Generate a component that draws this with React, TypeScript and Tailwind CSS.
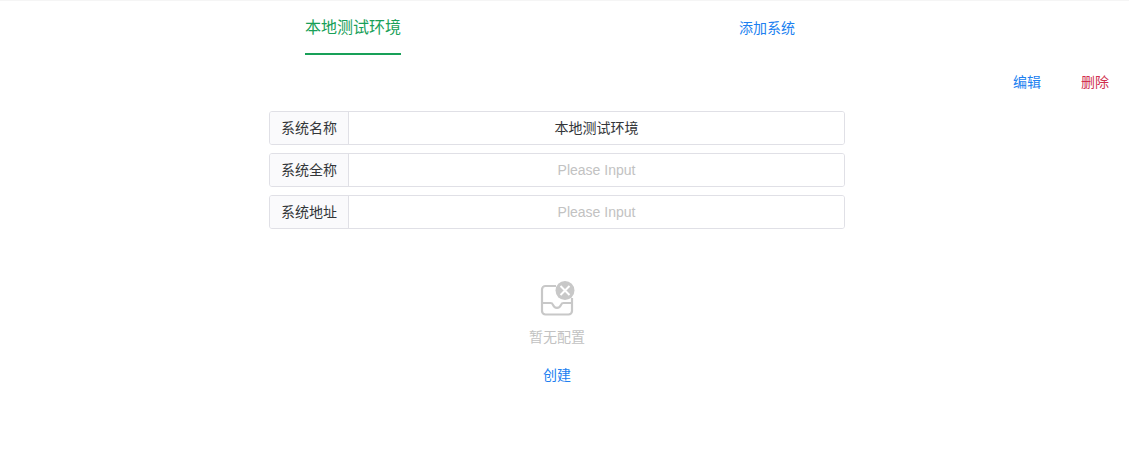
const FONT = "font-['Liberation_Sans','Noto_Sans_CJK_SC',sans-serif]";

const rows = [
  { label: '系统名称', value: '本地测试环境' },
  { label: '系统全称', value: '' },
  { label: '系统地址', value: '' },
];

const EmptyIcon = () => (
  <svg width="36" height="38" viewBox="0 0 36 38" fill="none" className="block">
    <path
      d="M17 6H6.5A3.5 3.5 0 0 0 3 9.5v21.5A3.5 3.5 0 0 0 6.5 34.5h23a3.5 3.5 0 0 0 3.5-3.5V18"
      stroke="#c8c8c8"
      strokeWidth="2.2"
    />
    <path
      d="M3 23h8.5c1.5 0 2 .6 2.5 1.8.7 1.8 2 3 4 3s3.300-1.200 4-3c.5-1.200 1-1.800 2.500-1.800H33"
      stroke="#c8c8c8"
      strokeWidth="2.2"
    />
    <circle cx="26" cy="10.500" r="9.500" fill="#c8c8c8" />
    <path d="M21.500 6l9 9M30.500 6l-9 9" stroke="#ffffff" strokeWidth="2" />
  </svg>
);

const App = () => {
  return (
    <div className={`${FONT} min-h-[461px] bg-white border-t border-[#f5f5f5]`}>
      {/* Tabs */}
      <div className="flex h-[55px] pl-[305px]">
        <div className="w-[96px] h-[54px] border-b-2 border-[#18a058] text-[16px] leading-[54px] text-[#18a058]">
          本地测试环境
        </div>
        <a className="ml-[338px] text-[14px] leading-[54px] text-[#2080f0]">添加系统</a>
      </div>

      {/* Actions */}
      <div className="flex justify-end gap-[40px] pr-[20px] mt-[16px] text-[14px] leading-[20px]">
        <a className="text-[#2080f0]">编辑</a>
        <a className="text-[#d03050]">删除</a>
      </div>

      {/* Form */}
      <div className="ml-[269px] w-[576px] mt-[19px] flex flex-col gap-[8px]">
        {rows.map(row => (
          <div
            key={row.label}
            className="flex h-[34px] border border-[#e0e0e6] rounded-[3px] text-[14px] overflow-hidden"
          >
            <div className="w-[79px] shrink-0 bg-[#fafafc] border-r border-[#e0e0e6] text-center leading-[32px] text-[#333639]">
              {row.label}
            </div>
            <input
              readOnly
              value={row.value}
              placeholder="Please Input"
              className="flex-1 min-w-0 text-center outline-none bg-white text-[#333639] placeholder:text-[#c2c2c2]"
            />
          </div>
        ))}
      </div>

      {/* Empty state */}
      <div className="w-[1114px] mt-[51px] flex flex-col items-center">
        <EmptyIcon />
        <div className="mt-[9px] text-[14px] leading-[20px] text-[#c2c2c2]">暂无配置</div>
        <a className="mt-[18px] text-[14px] leading-[20px] text-[#2080f0]">创建</a>
      </div>
    </div>
  );
};

export default App;
